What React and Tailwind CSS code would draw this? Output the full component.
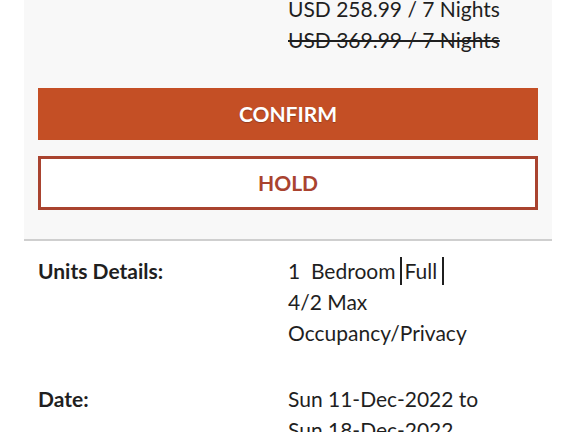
export default function App() {
  const font = { fontFamily: '"Lato", "Noto Sans", "Liberation Sans", sans-serif' };
  return (
    <div className="w-[576px] h-[432px] overflow-hidden bg-white text-[#1f1f1f]" style={font}>
      <div className="mx-[24px] bg-[#f8f8f8] border-b-2 border-[#cfcfcf] px-[14px] pb-[29px]">
        <div className="grid grid-cols-[250px_1fr] -mt-[7px] text-[21px] leading-[31px]">
          <div></div>
          <div>
            <div>USD 258.99 / 7 Nights</div>
            <div className="line-through">USD 369.99 / 7 Nights</div>
          </div>
        </div>
        <button className="mt-[33px] w-full h-[52px] bg-[#c44f25] text-white font-bold text-[21px] [text-shadow:0_1px_1px_rgba(0,0,0,0.25)]">
          CONFIRM
        </button>
        <button className="mt-[16px] w-full h-[54px] bg-white border-[3px] border-[#a9432f] text-[#a9432f] font-bold text-[21px]">
          HOLD
        </button>
      </div>
      <div className="px-[38px] pt-[14px] text-[21px] leading-[31px]">
        <div className="grid grid-cols-[250px_1fr]">
          <div className="font-bold">Units Details:</div>
          <div>
            <div className="flex items-center">
              <span>1&nbsp; Bedroom</span>
              <span className="inline-block h-[28px] border-l-2 border-[#1f1f1f] ml-[4px] mr-[3px]"></span>
              <span>Full</span>
              <span className="inline-block h-[28px] border-l-2 border-[#1f1f1f] ml-[5px]"></span>
            </div>
            <div>4/2 Max</div>
            <div>Occupancy/Privacy</div>
          </div>
        </div>
        <div className="grid grid-cols-[250px_1fr] mt-[35px]">
          <div className="font-bold">Date:</div>
          <div>
            <div>Sun 11-Dec-2022 to</div>
            <div>Sun 18-Dec-2022</div>
          </div>
        </div>
      </div>
    </div>
  );
}
